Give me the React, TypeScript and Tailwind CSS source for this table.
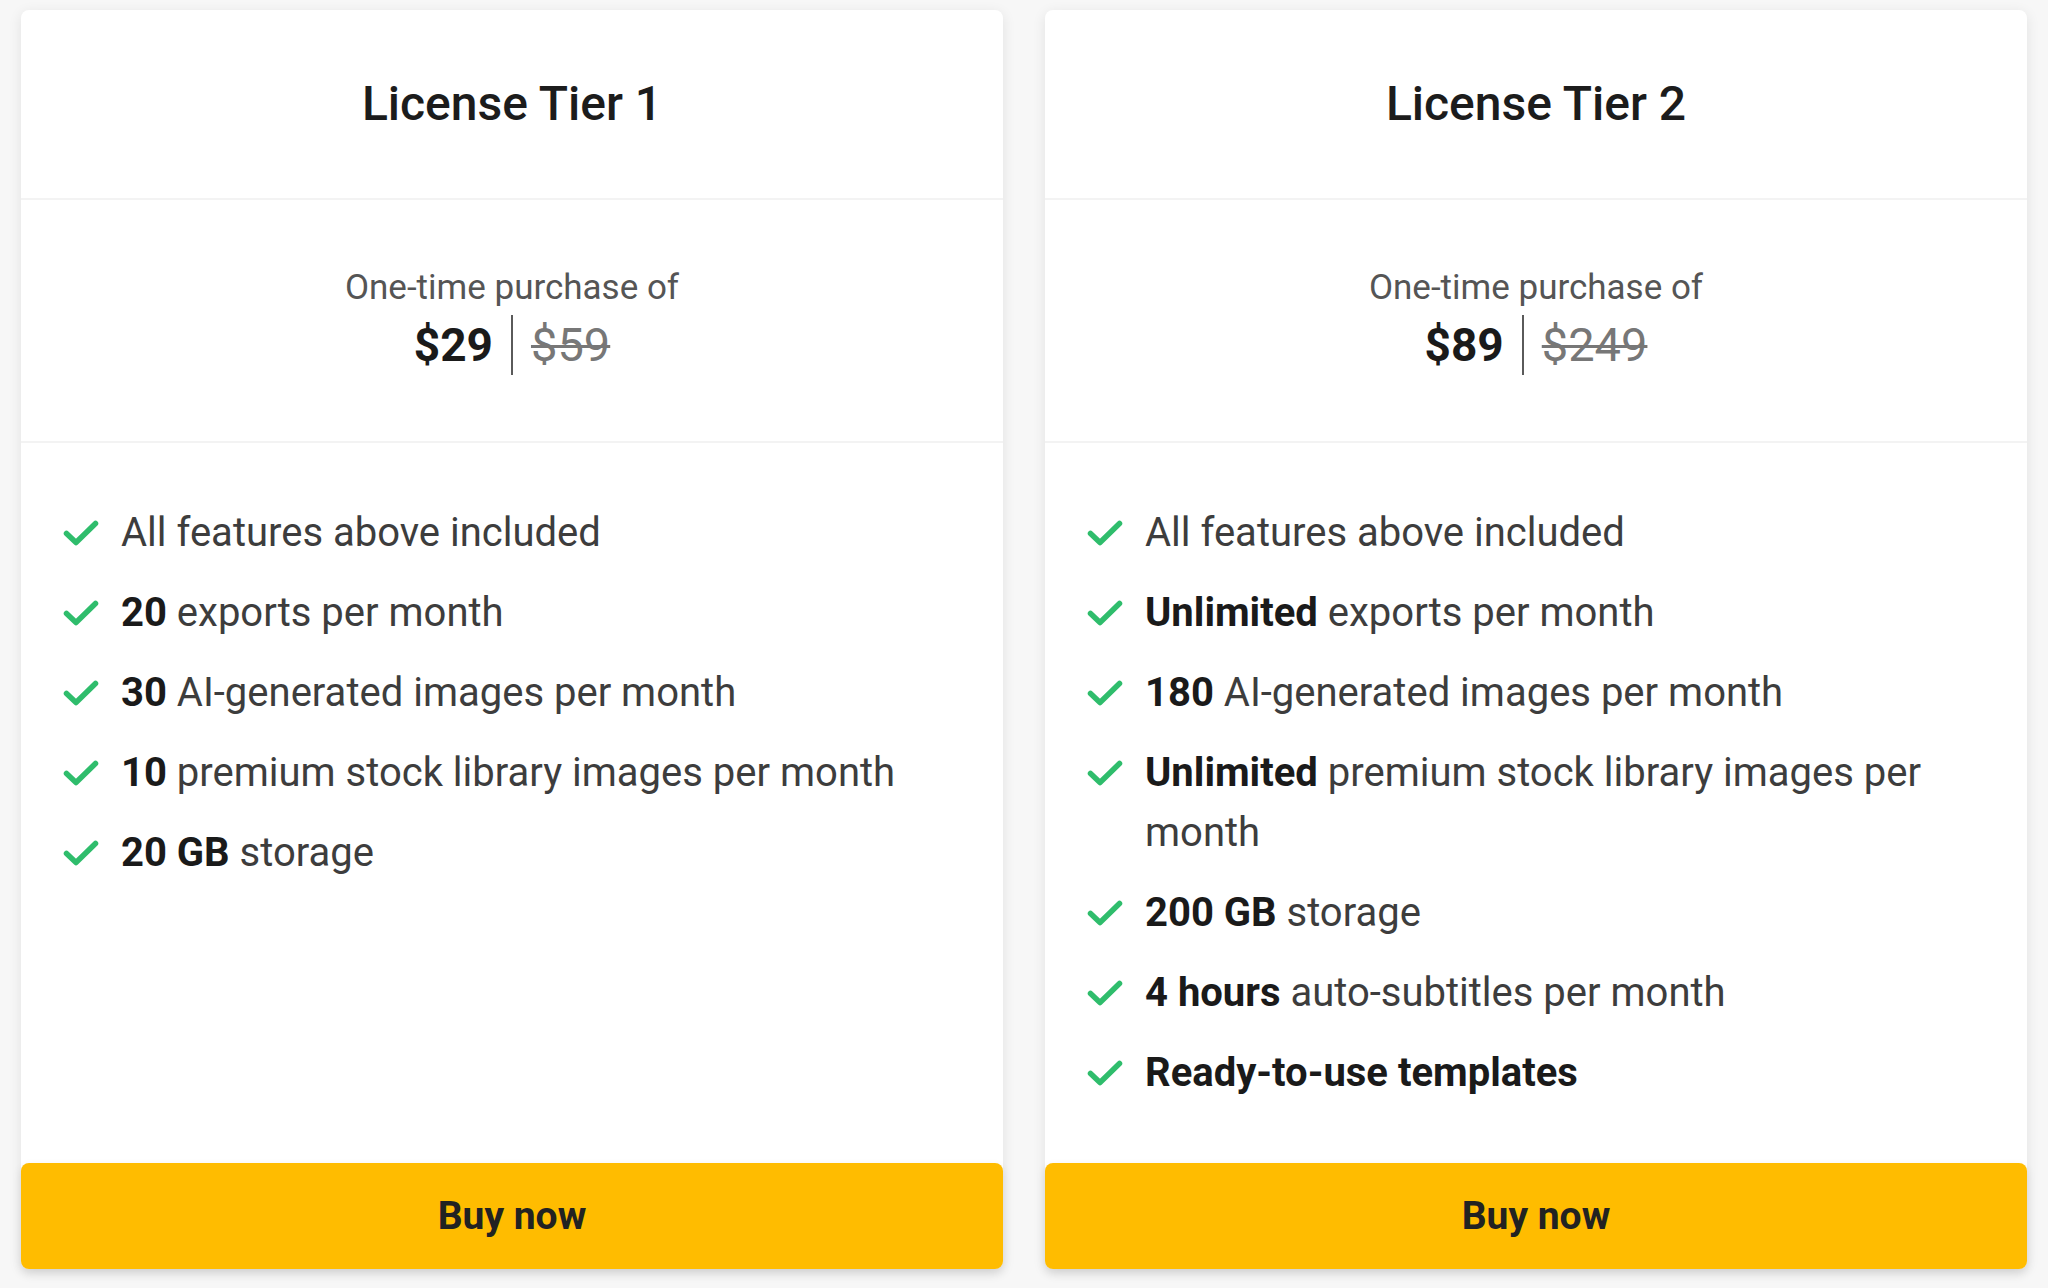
import React from 'react';

type Feature = {
  bold?: string;
  text: string;
};

interface Tier {
  name: string;
  price: string;
  oldPrice: string;
  features: Feature[];
}

const tiers: Tier[] = [
  {
    name: 'License Tier 1',
    price: '$29',
    oldPrice: '$59',
    features: [
      { text: 'All features above included' },
      { bold: '20', text: 'exports per month' },
      { bold: '30', text: 'AI-generated images per month' },
      { bold: '10', text: 'premium stock library images per month' },
      { bold: '20 GB', text: 'storage' }
    ]
  },
  {
    name: 'License Tier 2',
    price: '$89',
    oldPrice: '$249',
    features: [
      { text: 'All features above included' },
      { bold: 'Unlimited', text: 'exports per month' },
      { bold: '180', text: 'AI-generated images per month' },
      { bold: 'Unlimited', text: 'premium stock library images per month' },
      { bold: '200 GB', text: 'storage' },
      { bold: '4 hours', text: 'auto-subtitles per month' },
      { bold: 'Ready-to-use templates', text: '' }
    ]
  }
];

function CheckIcon() {
  return (
    <svg width="36" height="28" viewBox="0 0 36 28" fill="none" className="shrink-0">
      <path
        d="M3.5 14.5 L13 23.5 L32.5 4.5"
        stroke="#2fbd6c"
        strokeWidth="5.5"
        strokeLinecap="round"
        strokeLinejoin="round"
      />
    </svg>
  );
}

function TierCard({ tier }: { tier: Tier }) {
  return (
    <div className="flex flex-col bg-white shadow-[0_3px_14px_rgba(0,0,0,0.09)] rounded-lg">
      <div className="h-[190px] flex items-center justify-center border-b-2 border-[#f3f3f3]">
        <h2 className="text-[48px] leading-none font-medium text-[#1c1c1c]">{tier.name}</h2>
      </div>

      <div className="h-[243px] flex flex-col items-center justify-center border-b-2 border-[#f3f3f3]">
        <span className="text-[35px] leading-[42px] text-[#555555]">One-time purchase of</span>
        <div className="flex items-center mt-[6px] h-[60px]">
          <span className="text-[46px] font-bold leading-none text-[#1a1a1a]">{tier.price}</span>
          <span className="w-[2px] h-[60px] bg-[#5a5a5a] mx-[18px]" />
          <span className="text-[47px] leading-none text-[#777777] line-through decoration-[3px]">
            {tier.oldPrice}
          </span>
        </div>
      </div>

      <ul className="flex-1 flex flex-col gap-5 pt-[60px] pb-[60px] pl-[42px] pr-[40px]">
        {tier.features.map((f, i) => (
          <li key={i} className="flex items-start text-[40px] leading-[60px] text-[#3d3d3d]">
            <span className="h-[60px] flex items-center mr-[22px]">
              <CheckIcon />
            </span>
            <p>
              {f.bold ? <b className="font-bold text-[#1a1a1a]">{f.bold + (f.text ? ' ' : '')}</b> : null}
              {f.text}
            </p>
          </li>
        ))}
      </ul>

      <button className="h-[106px] w-full rounded-lg bg-[#ffbc00] text-[39px] font-bold text-[#222222] shadow-[0_4px_10px_rgba(0,0,0,0.1)]">
        Buy now
      </button>
    </div>
  );
}

export default function App() {
  return (
    <div
      className="w-[2048px] h-[1288px] bg-[#f7f7f7] px-[21px] pt-[10px] overflow-hidden"
      style={{ fontFamily: 'Roboto, "Liberation Sans", sans-serif' }}
    >
      <div className="grid grid-cols-2 gap-[42px]">
        {tiers.map((t) => (
          <TierCard key={t.name} tier={t} />
        ))}
      </div>
    </div>
  );
}
